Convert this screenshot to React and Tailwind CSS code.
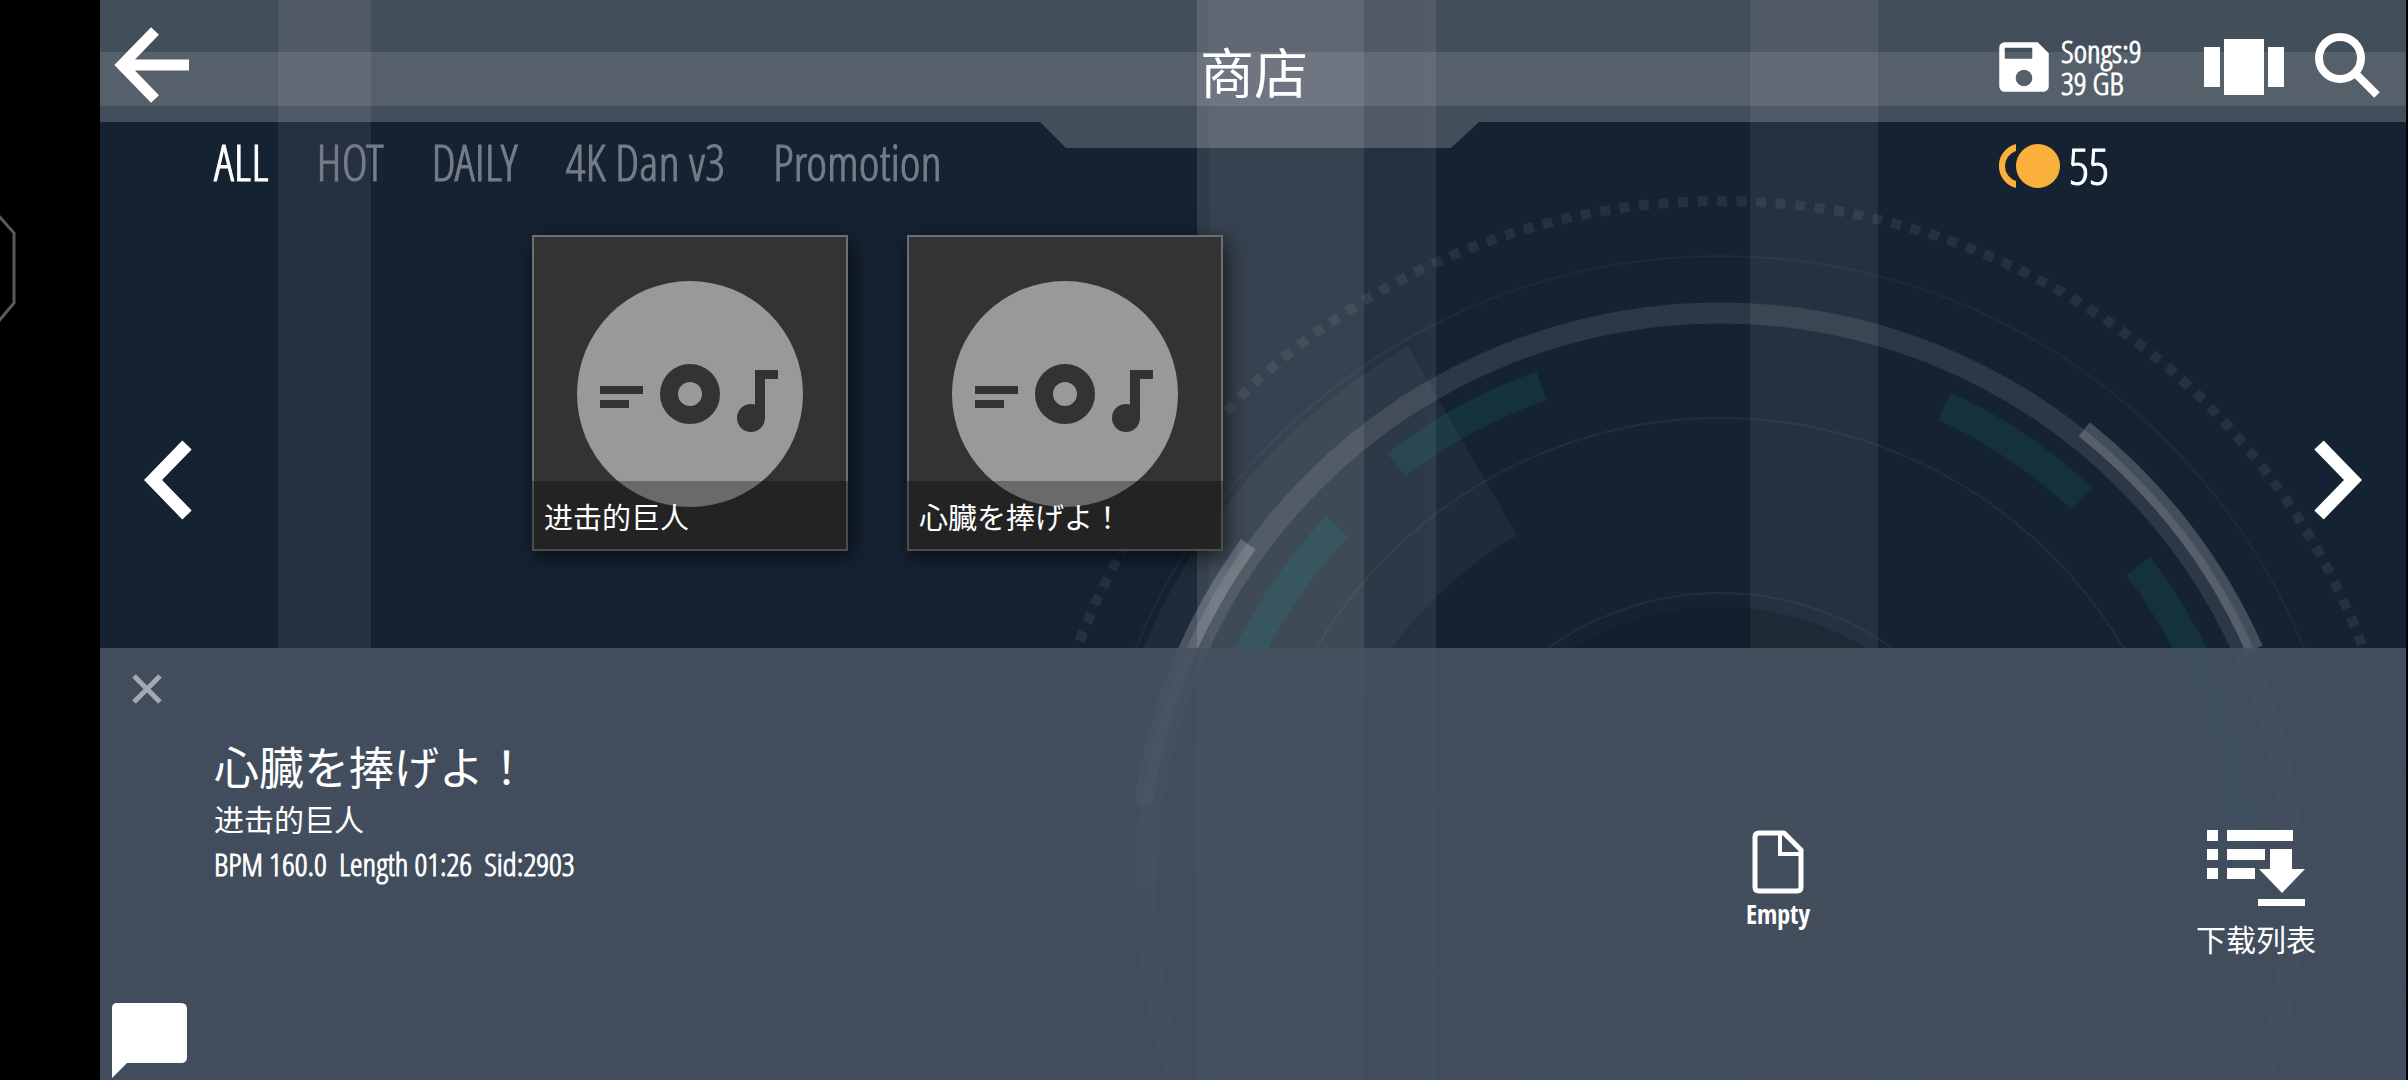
import React, { useState } from 'react';
import { MdSave, MdViewCarousel } from 'react-icons/md';

const TABS = ['ALL', 'HOT', 'DAILY', '4K Dan v3', 'Promotion'];

const SONGS = [
  { id: 1, title: '进击的巨人', lang: 'zh' },
  { id: 2, title: '心臓を捧げよ！', lang: 'ja' },
];

// Dial centre inside the 2306x1080 backdrop
const CX = 1620;
const CY = 887;

const point = (r, deg) => {
  const a = (deg * Math.PI) / 180;
  return `${(CX + r * Math.cos(a)).toFixed(1)} ${(CY + r * Math.sin(a)).toFixed(1)}`;
};

const arc = (r, from, to) => `M${point(r, from)}A${r} ${r} 0 0 1 ${point(r, to)}`;

const Backdrop = () => (
  <svg
    className="absolute inset-0 h-full w-full"
    viewBox="0 0 2306 1080"
    preserveAspectRatio="xMidYMid slice"
    aria-hidden="true"
  >
    {/* Light beams */}
    <g fill="#fff">
      <rect x="178" y="0" width="93" height="1080" opacity="0.07" />
      <rect x="1097" y="0" width="12" height="1080" opacity="0.12" />
      <rect x="1109" y="0" width="155" height="1080" opacity="0.15" />
      <rect x="1264" y="0" width="62" height="1080" opacity="0.07" />
      <rect x="1326" y="0" width="10" height="1080" opacity="0.08" />
      <rect x="1650" y="0" width="128" height="1080" opacity="0.07" />
    </g>

    {/* Dial */}
    <g fill="none" stroke="#fff">
      <circle cx={CX} cy={CY} r="686" strokeWidth="10" strokeOpacity="0.07" strokeDasharray="10 9.59" strokeDashoffset="3" transform={`rotate(-90 ${CX} ${CY})`} />
      <circle cx={CX} cy={CY} r="631" strokeWidth="2" strokeOpacity="0.04" />
      <circle cx={CX} cy={CY} r="574" strokeWidth="21" strokeOpacity="0.1" />
      <circle cx={CX} cy={CY} r="469" strokeWidth="2" strokeOpacity="0.05" />
      <circle cx={CX} cy={CY} r="294" strokeWidth="2" strokeOpacity="0.05" />
      <path d={arc(583, -172, -144)} strokeWidth="18" strokeOpacity="0.2" />
      <path d={arc(585, -51.5, -24)} strokeWidth="18" strokeOpacity="0.2" />
    </g>
    <circle cx={CX} cy={CY} r="280" fill="#0f1a20" fillOpacity="0.3" />
    <path
      d={`M${point(624, -180)}A624 624 0 0 1 ${point(624, -120)}L${point(406, -120)}A406 406 0 0 0 ${point(406, -180)}Z`}
      fill="#fff"
      fillOpacity="0.045"
    />
    <g fill="none" stroke="#0aaa94" strokeOpacity="0.12" strokeWidth="30">
      <path d={arc(532, -127.5, -109.6)} />
      <path d={arc(526, -179, -136.7)} />
      <path d={arc(531, -65, -47)} />
      <path d={arc(527, -37.5, 0)} />
    </g>
  </svg>
);

const BackArrow = () => (
  <svg className="h-[76px] w-[76px]" viewBox="0 0 76 76" fill="none" stroke="#fff" strokeWidth="11">
    <path d="M41 4 8 38l33 34M10 38h65" />
  </svg>
);

const Chevron = ({ flip = false }) => (
  <svg className={`h-20 w-12 ${flip ? 'rotate-180' : ''}`} viewBox="0 0 48 80" fill="none" stroke="#fff" strokeWidth="13">
    <path d="M43 5 9 40l34 35" />
  </svg>
);

const SearchIcon = () => (
  <svg className="size-[90px]" viewBox="0 0 90 90" fill="none" stroke="#fff">
    <circle cx="36" cy="36" r="21" strokeWidth="8" />
    <path d="M52 52 73 73" strokeWidth="8" />
  </svg>
);

const CloseIcon = () => (
  <svg className="size-[50px]" viewBox="0 0 50 50" fill="none" stroke="currentColor" strokeWidth="5">
    <path d="M12 12 38 38M38 12 12 38" />
  </svg>
);

const CoinIcon = () => (
  <svg className="h-11 w-[62px] shrink-0" viewBox="0 0 62 44" fill="#fbb03b">
    <circle cx="39" cy="22" r="22" />
    <path d="M17 0v7a15.7 15.7 0 0 0 0 30v7A22.7 22.7 0 0 1 17 0z" />
  </svg>
);

const CoverArt = () => (
  <svg className="h-full w-full" viewBox="0 0 312 312" fill="#333">
    <circle cx="156" cy="157" r="113" fill="#999" />
    <path d="M66 149h43v8H66zM66 163h29v8H66z" />
    <circle cx="156" cy="157" r="21" fill="none" stroke="#333" strokeWidth="18" />
    <path d="M221 133h23v9h-13v40h-10z" />
    <ellipse cx="217" cy="181" rx="14" ry="14" />
  </svg>
);

const FileIcon = () => (
  <svg className="h-16 w-[52px]" viewBox="0 0 52 64" fill="none" stroke="#fff" strokeWidth="5" strokeLinejoin="round">
    <path d="M7 3h25l17 17v37q0 4-4 4H7q-4 0-4-4V7q0-4 4-4z" />
    <path d="M28 3v21h21" strokeWidth="4" strokeLinejoin="miter" />
  </svg>
);

const DownloadListIcon = () => (
  <svg className="h-[76px] w-[98px]" viewBox="0 0 98 76" fill="#fff">
    <path d="M0 0h11v11H0zM0 19h11v11H0zM0 38h11v11H0zM20 0h66v11H20zM20 19h38v11H20zM20 38h28v11H20z" />
    <path d="M63 19h22v20h13L75 63 52 39h11zM51 69h47v7H51z" />
  </svg>
);

const ChatIcon = () => (
  <svg className="h-[75px] w-[75px]" viewBox="0 0 75 75" fill="#fff">
    <path d="M5 0h64q6 0 6 6v48q0 6-6 6H15L0 75V5q0-5 5-5z" />
  </svg>
);

const SongCard = ({ song }) => (
  <button className="relative h-[316px] w-[316px] border-2 border-[#6e6e6e] bg-[#333] shadow-[4px_6px_20px_rgba(0,0,0,0.6)]">
    <CoverArt />
    <span
      lang={song.lang}
      className="absolute -inset-x-0.5 -bottom-0.5 flex h-[70px] items-center bg-black/30 px-3 pt-1 text-[29px] text-white"
    >
      {song.title}
    </span>
  </button>
);

export default function App() {
  const [activeTab, setActiveTab] = useState('ALL');

  return (
    <div className="flex min-h-screen bg-black pr-0.5 font-['Open_Sans_Condensed_Light','Open_Sans_Condensed','Noto_Sans','Noto_Sans_CJK_SC',sans-serif] text-white">
      {/* Cutout side of the screen */}
      <aside className="w-[100px] shrink-0 pt-[215px]">
        <svg className="h-[108px] w-4" viewBox="0 0 16 108" fill="none" stroke="#5a5a5a" strokeWidth="3">
          <path d="M-2 0 14 18v70L-2 107" />
        </svg>
      </aside>

      <div className="relative flex flex-1 flex-col overflow-hidden bg-[#152232]">
        <Backdrop />

        {/* Header */}
        <header className="relative grid h-[122px] grid-cols-[1fr_auto_1fr] items-center bg-white/20 pr-3 pl-3.5">
          <div className="absolute inset-x-0 top-[52px] h-[54px] bg-white/10" />
          <div className="absolute top-full left-1/2 h-[26px] w-[452px] -translate-x-1/2 bg-white/20 [clip-path:polygon(13px_0,100%_0,424px_100%,39px_100%)]" />
          <button aria-label="Back" className="relative mb-[-8px] h-[90px] justify-self-start">
            <BackArrow />
          </button>
          <h1 className="relative pt-6 text-[54px] leading-[72px]">商店</h1>
          <div className="relative flex items-center gap-3 justify-self-end pt-3">
            <div className="flex w-[193px] items-center gap-1">
              <MdSave className="size-[66px] shrink-0" />
              <p className="flex flex-col text-[32px] leading-8 font-light whitespace-nowrap [-webkit-text-stroke:1px]">
                <span>Songs:9</span>
                <span>39 GB</span>
              </p>
            </div>
            <button aria-label="View mode">
              <MdViewCarousel className="size-24" />
            </button>
            <button aria-label="Search">
              <SearchIcon />
            </button>
          </div>
        </header>

        {/* Categories and balance */}
        <div className="relative flex h-20 items-center justify-between pl-[114px]">
          <nav className="flex gap-12 text-[50px] leading-[80px] font-light [-webkit-text-stroke:1px]">
            {TABS.map((tab) => (
              <button
                key={tab}
                onClick={() => setActiveTab(tab)}
                className={tab === activeTab ? 'text-white' : 'text-[#757c87]'}
              >
                {tab}
              </button>
            ))}
          </nav>
          <div className="flex w-[407px] items-center gap-2 pt-2 text-[50px] leading-[72px] font-light [-webkit-text-stroke:1px]">
            <CoinIcon />
            <span>55</span>
          </div>
        </div>

        {/* Song list */}
        <main className="relative flex flex-1 items-end justify-between px-11">
          <button aria-label="Previous page" className="mb-32">
            <Chevron />
          </button>
          <div className="flex flex-1 gap-[59px] self-start pt-[33px] pl-[340px]">
            {SONGS.map((song) => (
              <SongCard key={song.id} song={song} />
            ))}
          </div>
          <button aria-label="Next page" className="mb-32">
            <Chevron flip />
          </button>
        </main>

        {/* Song details */}
        <section className="relative flex min-h-[432px] flex-col bg-[#465261]/90 pt-4">
          <button aria-label="Close" className="ml-[22px] self-start text-[#a3a9b1]">
            <CloseIcon />
          </button>
          <div className="flex items-start justify-between pt-[22px] pr-[75px] pl-[114px]">
            <div>
              <h2 lang="ja" className="text-[45px] leading-[64px]">心臓を捧げよ！</h2>
              <p className="text-[30px] leading-10">进击的巨人</p>
              <p className="text-[32px] leading-12 font-light whitespace-pre [-webkit-text-stroke:1px]">BPM 160.0  Length 01:26  Sid:2903</p>
            </div>
            <div className="flex items-start gap-[328px] pt-[94px]">
              <button className="flex w-[150px] flex-col items-center">
                <FileIcon />
                <span className="font-['Open_Sans_Condensed',sans-serif] text-[26px] leading-10 font-bold">Empty</span>
              </button>
              <button className="flex w-[150px] flex-col items-center">
                <DownloadListIcon />
                <span className="pt-3.5 text-[30px] leading-10">下载列表</span>
              </button>
            </div>
          </div>
          <button aria-label="Chat" className="mt-auto mb-0.5 ml-3 self-start">
            <ChatIcon />
          </button>
        </section>
      </div>
    </div>
  );
}
